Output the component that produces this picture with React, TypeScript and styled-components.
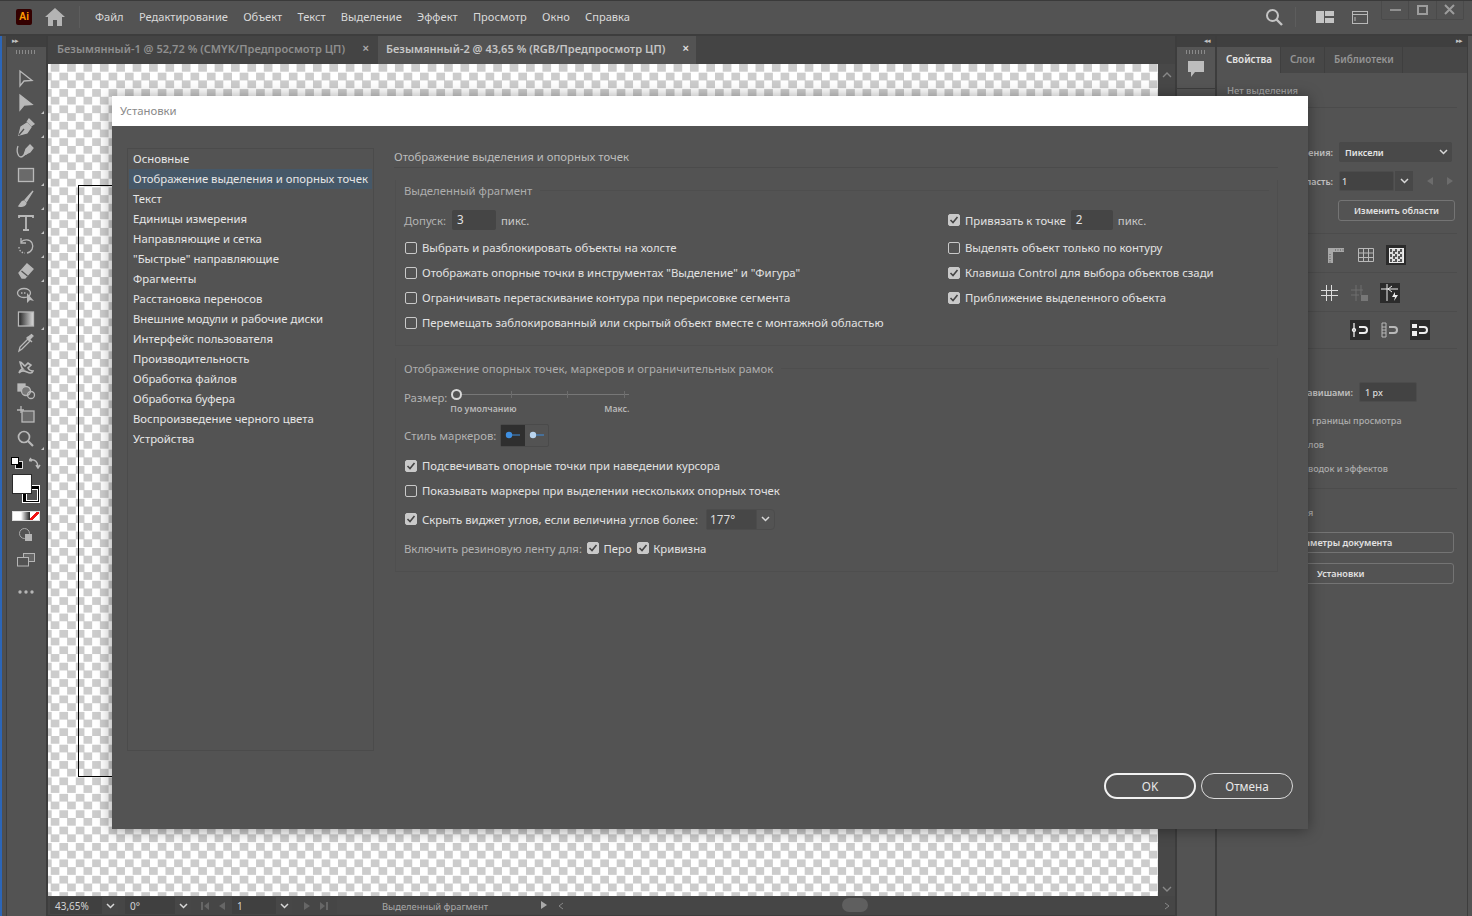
import React from "react";
import styled, { createGlobalStyle } from "styled-components";

const FONT = `"Noto Sans", "Open Sans", "Liberation Sans", sans-serif`;

const Global = createGlobalStyle`
  html, body { margin: 0; padding: 0; background: #535353; overflow: hidden; }
  * { box-sizing: border-box; }
  body { font-family: ${FONT}; }
`;

const Page = styled.div`
  position: relative; width: 1472px; height: 916px; overflow: hidden;
  background: #535353; color: #ccc; font-size: 12px;
  display: flex; flex-direction: column;
  border-top: 1px solid #3a3a3a;
`;

/* ---------- title bar ---------- */
const TitleBar = styled.header`
  flex: none; height: 35px; display: flex; align-items: center; position: relative;
  border-bottom: 2px solid #3d3d3d; padding: 0 0 1px 16px;
`;
const Logo = styled.div`
  width: 16px; height: 16px; background: #330000; border-radius: 2px; color: #ff9a00;
  font: 700 10px/16px "Liberation Sans", sans-serif; text-align: center; flex: none;
`;
const HomeSlot = styled.div`
  width: 35px; height: 22px; margin-left: 13px; flex: none;
  border-right: 1px solid #5d5d5d; display: flex; align-items: center;
`;
const Menu = styled.nav`
  display: flex; margin-left: 15px; gap: 15.25px; font-size: 11.1px; color: #dadada;
  transform: translateY(-1px);
`;
const Spacer = styled.div` flex: 1; `;
const TitleTools = styled.div`
  display: flex; align-items: center; margin-right: 104px;
`;
const ToolSep = styled.div` width: 1px; height: 20px; background: #5d5d5d; margin: 0 20px 0 12px; `;
const ToolGap = styled.div` width: 18px; `;
const WinControls = styled.div`
  position: absolute; right: 8px; top: -1px; width: 83px; height: 20px; display: flex;
  border: 1px solid #4a4a4a; border-top: none; border-radius: 0 0 2px 2px;
`;
const WinBtn = styled.div`
  flex: 1; display: flex; align-items: center; justify-content: center;
  & + & { border-left: 1px solid #4a4a4a; }
`;

/* ---------- workspace ---------- */
const Workspace = styled.div` flex: 1; display: flex; min-height: 0; `;
const Edge = styled.div`
  flex: none; width: 7px; border-right: 1px solid #3d3d3d;
  background: linear-gradient(90deg, #2c66b8 0 2px, #4f4f4f 2px);
`;
const ToolPanel = styled.aside`
  flex: none; width: 41px; padding-right: 2px; border-right: 2px solid #3d3d3d; display: flex; flex-direction: column; align-items: center;
`;
const DockStrip = styled.div<{ $align?: string; $bleed?: boolean }>`
  flex: none; align-self: stretch; height: 11px; background: #3f3f3f; color: #c4c4c4; font-size: 7px; line-height: 9px;
  display: flex; padding: 0 5px; letter-spacing: -1px; justify-content: ${(p) => p.$align || "flex-start"};
  margin-right: ${(p) => (p.$bleed ? -2 : 0)}px;
`;
const Grip = styled.div`
  width: 20px; height: 4px; margin-top: 3px; flex: none;
  background: repeating-linear-gradient(90deg, #8a8a8a 0 1px, transparent 1px 3px);
`;
const Tools = styled.div` display: flex; flex-direction: column; margin-top: 13px; `;
const ToolSlot = styled.div<{ $corner?: boolean }>`
  position: relative; width: 26px; height: 24px; display: flex; align-items: center; justify-content: center;
  ${(p) =>
    p.$corner
      ? `&::after { content: ""; position: absolute; right: -5px; bottom: 1px; border-left: 3px solid transparent; border-bottom: 3px solid #c4c4c4; }`
      : ""}
`;
const SwapRow = styled.div` width: 30px; display: flex; justify-content: space-between; align-items: center; margin-top: 6px; `;
const FillStroke = styled.div`
  position: relative; width: 30px; height: 31px; margin-top: 5px; flex: none;
`;
const FillBox = styled.div`
  position: absolute; left: 1px; top: 0; width: 20px; height: 20px; background: #fff; border: 1px solid #2a2a2a; z-index: 1;
`;
const StrokeBox = styled.div`
  position: absolute; left: 11px; top: 11px; width: 18px; height: 18px; background: #000; border: 1px solid #fff;
  &::after { content: ""; position: absolute; left: 3px; top: 3px; width: 10px; height: 10px; border: 1px solid #fff; background: #535353; }
`;
const ModeRow = styled.div`
  display: flex; width: 28px; height: 10px; margin-top: 6px; border: 1px solid #ddd; flex: none;
`;
const ModeCell = styled.div<{ $kind: "solid" | "grad" | "none" }>`
  flex: 1;
  background: ${(p) =>
    p.$kind === "solid"
      ? "#fff"
      : p.$kind === "grad"
      ? "linear-gradient(90deg,#fff,#222)"
      : "linear-gradient(135deg,#fff 0 38%,#e11 38% 62%,#fff 62%)"};
`;
const SmallSlot = styled.div<{ $mt: number }>`
  margin-top: ${(p) => p.$mt}px; display: flex; justify-content: center; flex: none;
`;

/* ---------- document ---------- */
const DocColumn = styled.main` flex: 1; min-width: 0; display: flex; flex-direction: column; border-right: 2px solid #3d3d3d; `;
const TabBar = styled.div` flex: none; height: 28px; display: flex; background: #444; `;
const DocTab = styled.div<{ $active?: boolean; $w: number }>`
  flex: none; width: ${(p) => p.$w}px; display: flex; align-items: center; justify-content: space-between;
  padding: 0 7px 4px ${(p) => (p.$active ? 8 : 9)}px; font-size: 11.05px; font-weight: 600; margin-right: 2px; white-space: nowrap;
  background: ${(p) => (p.$active ? "#535353" : "#444")};
  color: ${(p) => (p.$active ? "#c6c6c6" : "#8f8f8f")};
`;
const CloseMark = styled.span<{ $active?: boolean }>`
  font: 700 11px/1 "Liberation Sans", sans-serif; color: ${(p) => (p.$active ? "#ddd" : "#aaa")};
`;
const CanvasRow = styled.div` flex: 1; min-height: 0; display: flex; `;
const Canvas = styled.div`
  position: relative; flex: none; width: 1110px; overflow: hidden;
  background: repeating-conic-gradient(#ccc 0 25%, #fff 0 50%) -5px 0 / 16.4px 16.4px;
`;
const Artboard = styled.div`
  position: absolute; left: 30px; top: 121px; width: 400px; height: 592px; border: 1px solid #000; background: transparent;
`;
const VScroll = styled.div`
  flex: 1; background: #484848; display: flex; flex-direction: column; justify-content: space-between; align-items: center; padding: 8px 0 4px;
`;
const StatusBar = styled.footer`
  flex: none; height: 20px; display: flex; align-items: flex-start; background: #464646; font-size: 10px; color: #d4d4d4;
  padding: 1px 0 0 2px; border-bottom: 1px solid #3d3d3d;
`;
const StatusField = styled.div<{ $w: number }>`
  flex: none; width: ${(p) => p.$w}px; height: 17px; background: #404040; display: flex; align-items: center; padding: 1px 0 0 5px;
`;
const StatusChevron = styled.div<{ $mr?: number }>`
  flex: none; width: 16px; height: 17px; display: flex; align-items: center; justify-content: center; margin-right: ${(p) => p.$mr ?? 0}px; background: #474747;
`;
const NavGroup = styled.div<{ $w: number; $pl: number }>`
  flex: none; display: flex; align-items: center; gap: 10px; height: 17px; width: ${(p) => p.$w}px; padding-left: ${(p) => p.$pl}px;
`;
const StatusLabel = styled.div`
  flex: none; width: 203px; padding-left: 45px; color: #aaa; background: #484848; height: 17px; line-height: 19px; font-size: 9.4px; white-space: nowrap;
`;
const StatusArrow = styled.svg` flex: none; margin: 4px 0 0 1px; `;
const HScroll = styled.div`
  flex: 1; position: relative; display: flex; align-items: center; justify-content: space-between; padding: 0 5px 0 11px; height: 17px;
`;
const HThumb = styled.div`
  position: absolute; left: 295px; top: 1px; width: 26px; height: 14px; border-radius: 7px; background: #5f5f5f;
`;

/* ---------- right dock ---------- */
const IconDock = styled.div`
  flex: none; width: 40px; display: flex; flex-direction: column; border-right: 2px solid #3d3d3d;
`;
const DockGroup = styled.div`
  height: 42px; border-bottom: 1px solid #3d3d3d; display: flex; flex-direction: column; align-items: center; background: #555;
`;
const CommentIcon = styled.svg` margin-top: 6px; `;
const PropsDock = styled.aside`
  flex: none; width: 251px; display: flex; flex-direction: column; border-right: 1px solid #3d3d3d; margin-right: 4px;
`;
const PanelTabs = styled.div` flex: none; height: 26px; display: flex; background: #474747; `;
const PanelTab = styled.div<{ $active?: boolean; $w: number }>`
  flex: none; width: ${(p) => p.$w}px; padding-left: 9px; line-height: 24px; font-size: 9.9px; font-weight: 600;
  color: ${(p) => (p.$active ? "#e4e4e4" : "#959595")};
  background: ${(p) => (p.$active ? "#535353" : "#474747")};
  border-right: 1px solid #3f3f3f;
`;
const NoSel = styled.div`
  height: 35px; margin: 0 10px; padding-top: 11px; font-size: 9.4px; font-weight: 500; color: #a5a5a5; border-bottom: 1px solid #4b4b4b;
`;
const PRow = styled.div<{ $mt?: number; $h?: number; $pl?: number }>`
  flex: none; display: flex; align-items: center; margin-top: ${(p) => p.$mt ?? 0}px; height: ${(p) => p.$h ?? 20}px;
  padding-left: ${(p) => p.$pl ?? 0}px; font-size: 9px; font-weight: 500; color: #adadad;
`;
const PLabel = styled.span<{ $w?: number }>`
  width: ${(p) => p.$w ?? 116}px; text-align: right; margin-right: 6px; white-space: nowrap; flex: none; color: #c0c0c0; font-weight: 600;
`;
const PSelect = styled.div<{ $w: number }>`
  width: ${(p) => p.$w}px; height: 20px; background: #494949; color: #e6e6e6; display: flex; align-items: center;
  justify-content: space-between; padding: 0 4px 0 6px; font-weight: 600; border-radius: 2px;
`;
const PInput = styled.div<{ $w: number; $pl: number }>`
  width: ${(p) => p.$w}px; height: 20px; background: #434343; color: #ddd; display: flex; align-items: center; padding-left: ${(p) => p.$pl}px; border: 1px solid #4c4c4c; border-radius: 2px;
`;
const PChevron = styled.div`
  width: 18px; height: 20px; background: #484848; display: flex; align-items: center; justify-content: center; margin-left: 1px;
`;
const PagerArrow = styled.svg` margin-left: 14px; `;
const PButton = styled.div<{ $mt: number; $ml?: number; $w?: number; $pl?: number }>`
  flex: none; margin-top: ${(p) => p.$mt}px; margin-left: ${(p) => p.$ml ?? 86}px; width: ${(p) => p.$w ?? 150}px; height: 21px; border: 1px solid #747474; border-radius: 3px;
  color: #e2e2e2; font-size: 9.1px; font-weight: 600; line-height: 19px; padding-left: ${(p) => p.$pl ?? 15}px; white-space: nowrap;
`;
const IconSlot = styled.div<{ $active?: boolean }>`
  width: 20px; height: 20px; display: flex; align-items: center; justify-content: center; background: ${(p) => (p.$active ? "#2b2b2b" : "transparent")};
  margin-right: 10px;
`;
const CheckerIcon = styled.div`
  width: 15px; height: 15px; border: 1px solid #eee; background: repeating-conic-gradient(#ddd 0 25%, #555 0 50%) 0 0 / 5px 5px;
`;
const PDivider = styled.div<{ $mt: number }>`
  flex: none; height: 1px; background: #4c4c4c; margin: ${(p) => p.$mt}px 10px 0;
`;

/* ---------- dialog ---------- */
const Dialog = styled.section`
  position: absolute; left: 112px; top: 95px; width: 1196px; height: 733px; background: #535353;
  box-shadow: 0 1px 14px rgba(0, 0, 0, .4); display: flex; flex-direction: column;
`;
const DialogTitle = styled.div`
  flex: none; height: 30px; background: #fff; color: #8a8a8a; font-size: 11.35px; line-height: 30px; padding-left: 8px;
`;
const DialogBody = styled.div` flex: 1; min-height: 0; display: flex; padding: 23px 30px 0 15px; `;
const Sidebar = styled.ul`
  flex: none; width: 247px; height: 603px; margin: -1px 0 0 0; padding: 0; list-style: none; border: 1px solid #4b4b4b;
`;
const SideItem = styled.li<{ $active?: boolean }>`
  height: 20px; margin: 0 1px; padding-left: 4px; line-height: 19px; font-size: 11.35px; white-space: nowrap; color: #e6e6e6;
  background: ${(p) => (p.$active ? "#465868" : "transparent")};
`;
const MainPane = styled.div` flex: 1; margin-left: 20px; min-width: 0; `;
const PaneTitle = styled.div`
  height: 19px; line-height: 15px; border-bottom: 1px solid #4b4b4b; color: #bcbcbc; font-size: 11.35px;
`;
const Group = styled.div<{ $mt: number; $h: number }>`
  margin: ${(p) => p.$mt}px 0 0 1px; height: ${(p) => p.$h}px; padding: 0 8px; border: 1px solid #4e4e4e; border-top: none; border-left-color: #4f4f4f;
`;
const GroupTitle = styled.div`
  height: 22px; padding-bottom: 2px; color: #adadad; font-size: 11.35px; white-space: nowrap; display: flex; gap: 8px; align-items: center;
  &::after { content: ""; flex: 1; height: 1px; background: #4e4e4e; }
`;
const Columns = styled.div` display: grid; grid-template-columns: 543px 1fr; `;
const OptRow = styled.div<{ $h?: number; $mt?: number; $top?: boolean }>`
  height: ${(p) => p.$h ?? 25}px; margin-top: ${(p) => p.$mt ?? 0}px; display: flex; align-items: ${(p) => (p.$top ? "flex-start" : "center")}; white-space: nowrap;
  font-size: 11.35px; color: #e2e2e2;
`;
const Dim = styled.span<{ $mr?: number; $mtop?: number }>` color: #b2b2b2; margin-right: ${(p) => p.$mr ?? 4}px; margin-top: ${(p) => p.$mtop ?? 0}px; `;
const Unit = styled.span` color: #c9c9c9; margin-left: 5px; `;
const NumInput = styled.div<{ $w: number; $ml?: number }>`
  width: ${(p) => p.$w}px; height: 20px; background: #454545; color: #e4e4e4; padding-left: 5px; line-height: 19px; border-radius: 2px; font-size: 11.7px; margin-left: ${(p) => p.$ml ?? 0}px;
`;
const Check = styled.span<{ $on?: boolean; $inline?: boolean }>`
  flex: none; display: inline-flex; align-items: center; justify-content: center; width: 12px; height: 12px; margin: ${(p) => (p.$inline ? "0 4px 0 5.5px" : "0 5px 0 1px")};
  border-radius: 2px; border: 1px solid #c9c9c9; background: ${(p) => (p.$on ? "#c9c9c9" : "transparent")};
`;
const SliderBox = styled.div` position: relative; width: 185px; height: 38px; margin: -1px 0 0 3px; `;
const Track = styled.div` position: absolute; left: 12px; top: 9px; width: 167px; height: 1px; background: #777; `;
const Tick = styled.div<{ $x: number }>` position: absolute; left: ${(p) => p.$x}px; top: 6px; width: 1px; height: 7px; background: #6c6c6c; `;
const Knob = styled.div` position: absolute; left: 1px; top: 4px; width: 11px; height: 11px; border-radius: 50%; border: 2px solid #d8d8d8; `;
const SliderLabel = styled.div<{ $x: number }>`
  position: absolute; left: ${(p) => p.$x}px; top: 18px; font-size: 8.800px; font-weight: 600; color: #b9b9b9; white-space: nowrap;
`;
const MarkerChoice = styled.div` display: flex; height: 23px; margin-left: 4px; border: 1px solid #4a4a4a; border-radius: 2px; `;
const MarkerCell = styled.div<{ $active?: boolean }>`
  width: ${(p) => (p.$active ? 24 : 23)}px; background: ${(p) => (p.$active ? "#2f2f2f" : "transparent")};
  display: flex; align-items: center; justify-content: center;
`;
const Combo = styled.div`
  display: flex; width: 69px; height: 21px; border: 1px solid #4c4c4c; border-radius: 2px 4px 4px 2px; margin-left: 8px; color: #ddd;
`;
const ComboValue = styled.div` flex: 1; background: #474747; padding-left: 3px; line-height: 19px; font-size: 11.7px; `;
const ComboArrow = styled.div` width: 18px; display: flex; align-items: center; justify-content: center; border-left: 1px solid #4c4c4c; `;
const DialogFooter = styled.div` flex: none; height: 56px; display: flex; justify-content: flex-end; gap: 5px; padding-right: 15px; `;
const DlgButton = styled.button<{ $primary?: boolean }>`
  width: 92px; height: 26px; padding: 0; background: transparent; border-radius: 13px; color: #e8e8e8; font: 11.7px ${FONT};
  border: ${(p) => (p.$primary ? "2px solid #f2f2f2" : "1px solid #dcdcdc")};
`;

/* ---------- drawings ---------- */
const G = "#b9b9b9";
const Chevron = ({ c = "#d8d8d8" }: { c?: string }) => (
  <svg width="9" height="6" viewBox="0 0 9 6"><path d="M1 1l3.5 3.5L8 1" fill="none" stroke={c} strokeWidth="1.5" /></svg>
);
const Svg = ({ children, s = 20 }: { children: React.ReactNode; s?: number }) => (
  <svg width={s} height={s} viewBox="0 0 20 20" fill="none" stroke={G} strokeWidth="1.3">{children}</svg>
);
const toolIcons: [React.ReactNode, boolean][] = [
  [<path d="M4 2v15l4-5 8-.5z" />, false],
  [<path d="M4 2v15l4-5 8-.5z" fill={G} />, true],
  [<g><path d="M3 18l2-8 6-4 4 4-4 6z" fill={G} /><path d="M11 5l2-3 5 5-3 2" fill={G} /><path d="M3 18l5-6" stroke="#535353" /></g>, true],
  [<g><path d="M8 14l2-6 4-4 3 3-3 4z" fill={G} /><path d="M2 5c-2 5 0 11 3 11s3-4 6-3" /></g>, false],
  [<rect x="2.5" y="3.5" width="15" height="13" fill="#6a6a6a" />, true],
  [<g><path d="M17 2L9 11l1.5 1.5z" fill={G} /><path d="M8 12c-3 0-3 3-5 5 4 1 7-1 7-3z" fill={G} /></g>, true],
  [<path d="M3 5V3h14v2M10 3v14M7 17h6" strokeWidth="1.8" />, true],
  [<g><path d="M5 5c3-3 9-3 11 1s0 9-5 10" /><path d="M5 1v5h5" /><path d="M3 10c0 3 2 6 6 6" strokeDasharray="1.5 1.5" /></g>, true],
  [<g><path d="M3 12l8-9 6 5-8 9H6z" fill={G} /><path d="M5.5 10l6 5" stroke="#535353" /></g>, true],
  [<g><ellipse cx="8" cy="8" rx="6.5" ry="4.5" /><path d="M5 8h6" strokeDasharray="1.5 1.5" /><path d="M11 8v10l3-3 4 1z" fill={G} stroke="none" /></g>, false],
  [<g><defs><linearGradient id="tg"><stop offset="0" stopColor="#222" /><stop offset="1" stopColor="#ddd" /></linearGradient></defs><rect x="2.5" y="3" width="15" height="14" fill="url(#tg)" /></g>, true],
  [<g><path d="M3 18l1-4L12 6l2 2-8 8z" /><path d="M11 5l2 2 4-4-1.500-1.500z" fill={G} /><path d="M11 4l5 5" /></g>, false],
  [<path d="M3 16c2-3 6-2 8-1s5 2 6-1c-2 0-4-1-5-3l3-3-3-2-3 3c-2-1-3-4-5-4 1 3 1 5 3 7-2 0-3 1-4 4z" strokeWidth="1.600" />, false],
  [<g><rect x="2" y="3" width="7" height="7" fill={G} /><circle cx="10" cy="10" r="4.500" fill="#777" /><circle cx="15" cy="14" r="3.500" /></g>, false],
  [<g><rect x="6" y="6" width="12" height="11" fill="#6a6a6a" /><path d="M1 5h7M5 1v7" /></g>, false],
  [<g><circle cx="8" cy="8" r="5.500" strokeWidth="1.700" /><path d="M12 12l5 5" strokeWidth="2.200" /></g>, true],
];

const menu = ["Файл", "Редактирование", "Объект", "Текст", "Выделение", "Эффект", "Просмотр", "Окно", "Справка"];
const sections = [
  "Основные",
  "Отображение выделения и опорных точек",
  "Текст",
  "Единицы измерения",
  "Направляющие и сетка",
  '"Быстрые" направляющие',
  "Фрагменты",
  "Расстановка переносов",
  "Внешние модули и рабочие диски",
  "Интерфейс пользователя",
  "Производительность",
  "Обработка файлов",
  "Обработка буфера",
  "Воспроизведение черного цвета",
  "Устройства",
];

const Tick2 = () => (
  <svg width="10" height="10" viewBox="0 0 10 10"><path d="M1.500 5l2.500 2.500L8.500 2" fill="none" stroke="#444" strokeWidth="1.600" /></svg>
);
const Opt = ({ on, children }: { on?: boolean; children: React.ReactNode }) => (
  <OptRow>
    <Check $on={on}>{on && <Tick2 />}</Check>
    {children}
  </OptRow>
);
const Marker = ({ c }: { c: string }) => (
  <svg width="16" height="8" viewBox="0 0 16 8"><circle cx="4" cy="4" r="3.200" fill={c} /><path d="M7 4h8" stroke="#3f8fe0" strokeWidth="1" /></svg>
);

export default function App() {
  return (
    <Page>
      <Global />
      <TitleBar>
        <Logo>Ai</Logo>
        <HomeSlot>
          <svg width="20" height="18" viewBox="0 0 20 18"><path d="M10 0L0 9h3v9h5v-6h4v6h5V9h3z" fill="#b4b4b4" /></svg>
        </HomeSlot>
        <Menu>{menu.map((m) => <span key={m}>{m}</span>)}</Menu>
        <Spacer />
        <TitleTools>
          <svg width="18" height="18" viewBox="0 0 18 18" fill="none" stroke="#c4c4c4"><circle cx="7.500" cy="7.500" r="5.500" strokeWidth="2" /><path d="M11.500 11.500L17 17" strokeWidth="2.400" /></svg>
          <ToolSep />
          <svg width="18" height="14" viewBox="0 0 18 14" fill="#c4c4c4"><path d="M0 1h8v12H0zM9 1h9v5H9zM9 8h9v5H9z" /></svg>
          <ToolGap />
          <svg width="16" height="13" viewBox="0 0 16 13" fill="none" stroke="#b8b8b8"><rect x=".5" y=".5" width="15" height="12" /><path d="M.5 3.500h15M3 6v4" /></svg>
        </TitleTools>
        <WinControls>
          <WinBtn><svg width="11" height="4"><path d="M0 2h11" stroke="#8f8f8f" strokeWidth="2" /></svg></WinBtn>
          <WinBtn><svg width="11" height="10"><rect x="1" y="1" width="9" height="8" fill="none" stroke="#9c9c9c" strokeWidth="2" /></svg></WinBtn>
          <WinBtn><svg width="11" height="11"><path d="M1 1l9 9M10 1l-9 9" stroke="#9c9c9c" strokeWidth="2" /></svg></WinBtn>
        </WinControls>
      </TitleBar>

      <Workspace>
        <Edge />
        <ToolPanel>
          <DockStrip $bleed>▸▸</DockStrip>
          <Grip />
          <Tools>
            {toolIcons.map(([icon, corner], i) => (
              <ToolSlot key={i} $corner={corner}><Svg>{icon}</Svg></ToolSlot>
            ))}
          </Tools>
          <SwapRow>
            <svg width="12" height="12" viewBox="0 0 12 12"><rect x="4.500" y="4.500" width="7" height="7" fill="#000" stroke="#ddd" /><rect x=".5" y=".5" width="7" height="7" fill="#fff" stroke="#000" /></svg>
            <svg width="12" height="12" viewBox="0 0 12 12" fill="none" stroke="#bbb" strokeWidth="1.500"><path d="M1 3c5-1 8 2 8 7M0 4l2-3M0 3l3 1M7 8l2 3 2-3" /></svg>
          </SwapRow>
          <FillStroke><FillBox /><StrokeBox /></FillStroke>
          <ModeRow><ModeCell $kind="solid" /><ModeCell $kind="grad" /><ModeCell $kind="none" /></ModeRow>
          <SmallSlot $mt={6}>
            <svg width="16" height="16" viewBox="0 0 16 16"><circle cx="6.500" cy="6.500" r="5" fill="none" stroke="#aaa" /><rect x="7" y="7" width="7" height="7" fill="#b5b5b5" /></svg>
          </SmallSlot>
          <SmallSlot $mt={10}>
            <svg width="18" height="14" viewBox="0 0 18 14" fill="none" stroke="#b5b5b5"><rect x="6.500" y=".5" width="11" height="8" fill="#666" /><rect x=".5" y="4.500" width="11" height="8.500" fill="#535353" /></svg>
          </SmallSlot>
          <SmallSlot $mt={23}>
            <svg width="16" height="4" viewBox="0 0 16 4" fill="#b5b5b5"><circle cx="2" cy="2" r="1.700" /><circle cx="8" cy="2" r="1.700" /><circle cx="14" cy="2" r="1.700" /></svg>
          </SmallSlot>
        </ToolPanel>

        <DocColumn>
          <TabBar>
            <DocTab $w={328}>Безымянный-1 @ 52,72 % (CMYK/Предпросмотр ЦП)<CloseMark>×</CloseMark></DocTab>
            <DocTab $active $w={318}>Безымянный-2 @ 43,65 % (RGB/Предпросмотр ЦП)<CloseMark $active>×</CloseMark></DocTab>
          </TabBar>
          <CanvasRow>
            <Canvas><Artboard /></Canvas>
            <VScroll>
              <svg width="10" height="6" viewBox="0 0 10 6"><path d="M1 5l4-4 4 4" fill="none" stroke="#888" strokeWidth="1.400" /></svg>
              <svg width="10" height="6" viewBox="0 0 10 6"><path d="M1 1l4 4 4-4" fill="none" stroke="#888" strokeWidth="1.400" /></svg>
            </VScroll>
          </CanvasRow>
          <StatusBar>
            <StatusField $w={52}>43,65%</StatusField>
            <StatusChevron $mr={7}><Chevron /></StatusChevron>
            <StatusField $w={50}>0°</StatusField>
            <StatusChevron><Chevron /></StatusChevron>
            <NavGroup $w={41} $pl={10}>
              <svg width="8" height="8" fill="#666"><path d="M0 0h2v8H0zM8 0v8L3 4z" /></svg>
              <svg width="6" height="8" fill="#666"><path d="M6 0v8L0 4z" /></svg>
            </NavGroup>
            <StatusField $w={44}>1</StatusField>
            <StatusChevron><Chevron /></StatusChevron>
            <NavGroup $w={45} $pl={12}>
              <svg width="6" height="8" fill="#666"><path d="M0 0v8l6-4z" /></svg>
              <svg width="8" height="8" fill="#666"><path d="M8 0H6v8h2zM0 0v8l5-4z" /></svg>
            </NavGroup>
            <StatusLabel>Выделенный фрагмент</StatusLabel>
            <StatusArrow width="6" height="8" fill="#aaa"><path d="M0 0v8l6-4z" /></StatusArrow>
            <HScroll>
              <svg width="6" height="8"><path d="M5 1L1 4l4 3" fill="none" stroke="#888" /></svg>
              <HThumb />
              <svg width="6" height="8"><path d="M1 1l4 3-4 3" fill="none" stroke="#888" /></svg>
            </HScroll>
          </StatusBar>
        </DocColumn>

        <IconDock>
          <DockStrip $align="flex-end">◂◂</DockStrip>
          <DockGroup>
            <Grip />
            <CommentIcon width="18" height="18" viewBox="0 0 18 18"><path d="M1 1h16v11H8l-4 5v-5H1z" fill="#bdbdbd" /></CommentIcon>
          </DockGroup>
        </IconDock>
        <PropsDock>
          <DockStrip $align="flex-end">▸▸</DockStrip>
          <PanelTabs>
            <PanelTab $active $w={64}>Свойства</PanelTab>
            <PanelTab $w={44}>Слои</PanelTab>
            <PanelTab $w={78}>Библиотеки</PanelTab>
          </PanelTabs>
          <NoSel>Нет выделения</NoSel>
          <PRow $mt={34}>
            <PLabel>Единицы измерения:</PLabel>
            <PSelect $w={113}>Пиксели<Chevron /></PSelect>
          </PRow>
          <PRow $mt={9}>
            <PLabel>Монтажная область:</PLabel>
            <PInput $w={55} $pl={2}>1</PInput>
            <PChevron><Chevron /></PChevron>
            <PagerArrow width="6" height="8" fill="#6c6c6c"><path d="M6 0v8L0 4z" /></PagerArrow>
            <PagerArrow width="6" height="8" fill="#6c6c6c"><path d="M0 0v8l6-4z" /></PagerArrow>
          </PRow>
          <PButton $mt={9} $ml={121} $w={117} $pl={15}>Изменить области</PButton>
          <PDivider $mt={12} />
          <PRow $mt={11} $h={20} $pl={109}>
            <IconSlot><Svg><path d="M2 3h16v4H7v11H2z" fill="#a8a8a8" stroke="none" /><path d="M9 5h9M4 9v9" stroke="#535353" strokeWidth="1" strokeDasharray="1 1.500" /></Svg></IconSlot>
            <IconSlot><Svg><path d="M2.500 3.500h15v13h-15zM7.500 3.500v13M12.500 3.500v13M2.500 8h15M2.500 12.500h15" strokeWidth="1" /></Svg></IconSlot>
            <IconSlot $active><CheckerIcon /></IconSlot>
          </PRow>
          <PDivider $mt={7} />
          <PRow $mt={10} $h={20} $pl={103}>
            <IconSlot><Svg><path d="M1 7.500h17M1 12.500h17M6.500 2v16M11.500 2v16" strokeWidth="1" stroke="#ddd" /></Svg></IconSlot>
            <IconSlot><Svg><path d="M1 7h12M1 12h8M6 2v16M11 2v10" stroke="#6f6f6f" strokeWidth="1" /><rect x="11" y="12" width="7" height="6" fill="#777" stroke="none" /></Svg></IconSlot>
            <IconSlot $active><Svg><path d="M1 6h17M7 1v17M8 6l4-3M8 6l4 3" stroke="#eee" strokeWidth="1" /><path d="M15 9l-3 5h3l-1 4 4-6h-3z" fill="#eee" stroke="none" /></Svg></IconSlot>
          </PRow>
          <PDivider $mt={8} />
          <PRow $mt={8} $h={20} $pl={133}>
            <IconSlot $active><Svg><path d="M4 3v14" stroke="#eee" /><circle cx="4" cy="10" r="1.500" stroke="#eee" /><path d="M9 7h5a3 3 0 010 6H9" stroke="#eee" strokeWidth="2" /></Svg></IconSlot>
            <IconSlot><Svg><path d="M2 3h4v14H2zM2 7h4M2 10h4M2 13h4" strokeWidth="1" /><path d="M9 7h5a3 3 0 010 6H9" strokeWidth="2" /></Svg></IconSlot>
            <IconSlot $active><Svg><path d="M2 4h5v4H2zM2 11h5v5H2z" fill="#eee" stroke="none" /><path d="M9 7h5a3 3 0 010 6H9" stroke="#eee" strokeWidth="2" /></Svg></IconSlot>
          </PRow>
          <PDivider $mt={8} />
          <PRow $mt={33}>
            <PLabel $w={136}>Шаг клавишами:</PLabel>
            <PInput $w={58} $pl={5}>1 px</PInput>
          </PRow>
          <PRow $mt={9} $h={18} $pl={95}>границы просмотра</PRow>
          <PRow $mt={6} $h={18} $pl={91}>лов</PRow>
          <PRow $mt={6} $h={18} $pl={91}>водок и эффектов</PRow>
          <PDivider $mt={11} />
          <PRow $mt={14} $h={18} $pl={91}>я</PRow>
          <PButton $mt={11} $ml={60} $w={177} $pl={9}>Параметры документа</PButton>
          <PButton $mt={10} $ml={60} $w={177} $pl={39}>Установки</PButton>
        </PropsDock>
      </Workspace>

      <Dialog>
        <DialogTitle>Установки</DialogTitle>
        <DialogBody>
          <Sidebar>
            {sections.map((s, i) => <SideItem key={s} $active={i === 1}>{s}</SideItem>)}
          </Sidebar>
          <MainPane>
            <PaneTitle>Отображение выделения и опорных точек</PaneTitle>
            <Group $mt={12} $h={166}>
              <GroupTitle>Выделенный фрагмент</GroupTitle>
              <Columns>
                <div>
                  <OptRow $h={24} $mt={6}><Dim $mr={6}>Допуск:</Dim><NumInput $w={44}>3</NumInput><Unit>пикс.</Unit></OptRow>
                  <OptRow $h={3} />
                  <Opt>Выбрать и разблокировать объекты на холсте</Opt>
                  <Opt>Отображать опорные точки в инструментах "Выделение" и "Фигура"</Opt>
                  <Opt>Ограничивать перетаскивание контура при перерисовке сегмента</Opt>
                  <Opt>Перемещать заблокированный или скрытый объект вместе с монтажной областью</Opt>
                </div>
                <div>
                  <OptRow $h={24} $mt={6}>
                    <Check $on><Tick2 /></Check>Привязать к точке<NumInput $w={42} $ml={5}>2</NumInput><Unit>пикс.</Unit>
                  </OptRow>
                  <OptRow $h={3} />
                  <Opt>Выделять объект только по контуру</Opt>
                  <Opt on>Клавиша Control для выбора объектов сзади</Opt>
                  <Opt on>Приближение выделенного объекта</Opt>
                </div>
              </Columns>
            </Group>
            <Group $mt={12} $h={214}>
              <GroupTitle>Отображение опорных точек, маркеров и ограничительных рамок</GroupTitle>
              <OptRow $h={36} $mt={6} $top>
                <Dim $mr={0} $mtop={4}>Размер:</Dim>
                <SliderBox>
                  <Track />
                  <Tick $x={61} /><Tick $x={117} /><Tick $x={174} />
                  <Knob />
                  <SliderLabel $x={0}>По умолчанию</SliderLabel>
                  <SliderLabel $x={154}>Макс.</SliderLabel>
                </SliderBox>
              </OptRow>
              <OptRow $h={26}>
                <Dim $mr={0}>Стиль маркеров:</Dim>
                <MarkerChoice>
                  <MarkerCell $active><Marker c="#3f8fe0" /></MarkerCell>
                  <MarkerCell><Marker c="#b9d4ee" /></MarkerCell>
                </MarkerChoice>
              </OptRow>
              <OptRow $h={5} />
              <Opt on>Подсвечивать опорные точки при наведении курсора</Opt>
              <Opt>Показывать маркеры при выделении нескольких опорных точек</Opt>
              <OptRow $h={28} $mt={2}>
                <Check $on><Tick2 /></Check>Скрыть виджет углов, если величина углов более:
                <Combo><ComboValue>177°</ComboValue><ComboArrow><Chevron /></ComboArrow></Combo>
              </OptRow>
              <OptRow $h={30}>
                <Dim $mr={0}>Включить резиновую ленту для:</Dim>
                <Check $on $inline><Tick2 /></Check>Перо
                <Check $on $inline><Tick2 /></Check>Кривизна
              </OptRow>
            </Group>
          </MainPane>
        </DialogBody>
        <DialogFooter>
          <DlgButton $primary>OK</DlgButton>
          <DlgButton>Отмена</DlgButton>
        </DialogFooter>
      </Dialog>
    </Page>
  );
}
